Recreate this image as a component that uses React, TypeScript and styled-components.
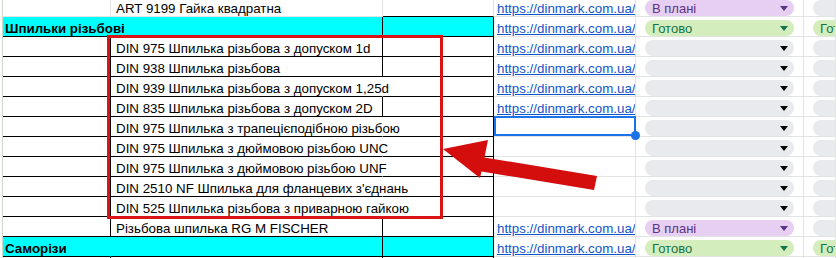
import { FC } from "react";
import styled, { createGlobalStyle, css } from "styled-components";

const GlobalStyle = createGlobalStyle`
    html, body {
        margin: 0;
        padding: 0;
        background: #fff;
    }
    body {
        font-family: "Liberation Sans", Arial, sans-serif;
        overflow: hidden;
    }
`;

const DARK = '#000';
const LIGHT = '#e2e3e3';
const CYAN = '#00ffff';

type Tone = 'plan' | 'done' | 'none';

const tones: Record<Tone, { bg: string; fg: string; label: string }> = {
    plan: { bg: '#e6cff2', fg: '#5a3286', label: 'В плані' },
    done: { bg: '#d4edbc', fg: '#11734b', label: 'Готово' },
    none: { bg: '#e8eaed', fg: '#000', label: '' },
};

const Sheet = styled.div`
    position: relative;
    width: 836px;
    height: 258px;
    overflow: hidden;
    background: #fff;
`;

const Row = styled.div<{ $first?: boolean }>`
    display: grid;
    grid-template-columns: 3px 108px 272px 111px 142px 168px 1fr;
    height: 20px;
    margin-top: ${props => props.$first ? '-3px' : '0'};
`;

const Gutter = styled.div`
    border-right: 1px solid #cdd8cd;
`;

interface CellProps {
    $bg?: string;
    $line: string;
    $bottom?: string;
    $open?: boolean;
    $pad: number;
    $bold?: boolean;
}

// a cell whose text runs on into the empty cell to its right sits above it
const Cell = styled.div<CellProps>`
    position: relative;
    z-index: ${props => props.$open ? 2 : 1};
    display: flex;
    align-items: flex-end;
    box-sizing: border-box;
    padding-left: ${props => props.$pad}px;
    background: ${props => props.$bg ?? 'transparent'};
    border-bottom: 1px solid ${props => props.$bottom ?? props.$line};
    border-right: 1px solid ${props => props.$open ? 'transparent' : props.$line};
    font-size: 13.33px;
    line-height: 14px;
    font-weight: ${props => props.$bold ? 700 : 400};
    white-space: nowrap;
    color: #000;
`;

const LinkCell = styled.div<{ $selected?: boolean }>`
    position: relative;
    display: flex;
    align-items: flex-end;
    box-sizing: border-box;
    padding-left: 3px;
    border-bottom: 1px solid ${LIGHT};
    border-right: 1px solid ${LIGHT};
    overflow: hidden;

    ${props => props.$selected && css`
        overflow: visible;
        z-index: 3;
        &::after {
            content: '';
            position: absolute;
            top: -1px;
            left: 0;
            right: -1px;
            bottom: 0;
            border: 2px solid #1a73e8;
        }
        &::before {
            content: '';
            position: absolute;
            right: -5px;
            bottom: -4px;
            width: 9px;
            height: 9px;
            border-radius: 50%;
            background: #1a73e8;
            z-index: 1;
        }
    `}
`;

const Link = styled.a`
    color: #1155cc;
    text-decoration: underline;
    font-size: 13.33px;
    line-height: 14px;
    white-space: nowrap;
`;

const ChipCell = styled.div`
    box-sizing: border-box;
    padding: 3px 0 0 9px;
    border-bottom: 1px solid ${LIGHT};
    border-right: 1px solid ${LIGHT};
    overflow: hidden;
`;

const Chip = styled.div<{ $tone: Tone }>`
    box-sizing: border-box;
    width: 149px;
    height: 16px;
    padding: 0 6px 0 7px;
    border-radius: 8px;
    display: flex;
    align-items: center;
    justify-content: space-between;
    background: ${props => tones[props.$tone].bg};
    color: ${props => tones[props.$tone].fg};
    font-size: 13px;
    line-height: 16px;
`;

const ChipLabel = styled.span`
    position: relative;
    top: 1px;
    white-space: nowrap;
`;

const Caret = styled.span<{ $tone: Tone }>`
    width: 0;
    height: 0;
    border-left: 4.5px solid transparent;
    border-right: 4.5px solid transparent;
    border-top: 5px solid ${props => tones[props.$tone].fg};
`;

const Highlight = styled.div`
    position: absolute;
    left: 107px;
    top: 35px;
    width: 336px;
    height: 184px;
    box-sizing: border-box;
    border: 3px solid #d81414;
    z-index: 5;
    pointer-events: none;
`;

const Pointer = styled.svg`
    position: absolute;
    left: 0;
    top: 0;
    z-index: 6;
    pointer-events: none;
`;

interface RowData {
    name?: string;
    section?: string;
    spill?: boolean;
    link?: boolean;
    selected?: boolean;
    status?: Tone;
    next?: Tone;
    plain?: boolean;
}

const URL = 'https://dinmark.com.ua/';

const rows: RowData[] = [
    { name: 'ART 9199 Гайка квадратна', link: true, status: 'plan', next: 'none', plain: true },
    { section: 'Шпильки різьбові', link: true, status: 'done', next: 'done' },
    { name: 'DIN 975 Шпилька різьбова з допуском 1d', link: true },
    { name: 'DIN 938 Шпилька різьбова', link: true },
    { name: 'DIN 939 Шпилька різьбова з допуском 1,25d', link: true, spill: true },
    { name: 'DIN 835 Шпилька різьбова з допуском 2D', link: true },
    { name: 'DIN 975 Шпилька з трапецієподібною різьбою', spill: true, selected: true },
    { name: 'DIN 975 Шпилька з дюймовою різьбою UNC', spill: true },
    { name: 'DIN 975 Шпилька з дюймовою різьбою UNF', spill: true },
    { name: "DIN 2510 NF Шпилька для фланцевих з'єднань", spill: true },
    { name: 'DIN 525 Шпилька різьбова з приварною гайкою', spill: true },
    { name: 'Різьбова шпилька RG M FISCHER', link: true, status: 'plan', next: 'none' },
    { section: 'Саморізи', link: true, status: 'done', next: 'done' },
    {},
];

const StatusChip: FC<{ tone: Tone }> = ({ tone }) => (
    <Chip $tone={tone}>
        <ChipLabel>{tones[tone].label}</ChipLabel>
        <Caret $tone={tone} />
    </Chip>
);

const SheetRow: FC<{ row: RowData; first?: boolean }> = ({ row, first }) => {
    const line = row.plain ? LIGHT : DARK;
    const bg = row.section ? CYAN : undefined;
    return (
        <Row $first={first}>
            <Gutter />
            <Cell $line={line} $bg={bg} $pad={2} $bold $open={!!row.section}>
                {row.section}
            </Cell>
            <Cell $line={line} $bg={bg} $pad={5} $open={row.spill}>
                {row.name}
            </Cell>
            <Cell $line={line} $bg={bg} $pad={3} $bottom={DARK} />
            <LinkCell $selected={row.selected}>
                {row.link && <Link href="#">{URL}</Link>}
            </LinkCell>
            <ChipCell>
                <StatusChip tone={row.status ?? 'none'} />
            </ChipCell>
            <ChipCell>
                <StatusChip tone={row.next ?? 'none'} />
            </ChipCell>
        </Row>
    );
};

const App: FC = () => (
    <>
        <GlobalStyle />
        <Sheet>
            {rows.map((row, i) => (
                <SheetRow key={i} row={row} first={i === 0} />
            ))}
            <Highlight />
            <Pointer width="836" height="258" viewBox="0 0 836 258">
                <polygon
                    points="443,149 488,140 484.5,157.5 597,176 594,190 481.5,171.5 480,178"
                    fill="#d40d0d"
                />
            </Pointer>
        </Sheet>
    </>
);

export default App;
